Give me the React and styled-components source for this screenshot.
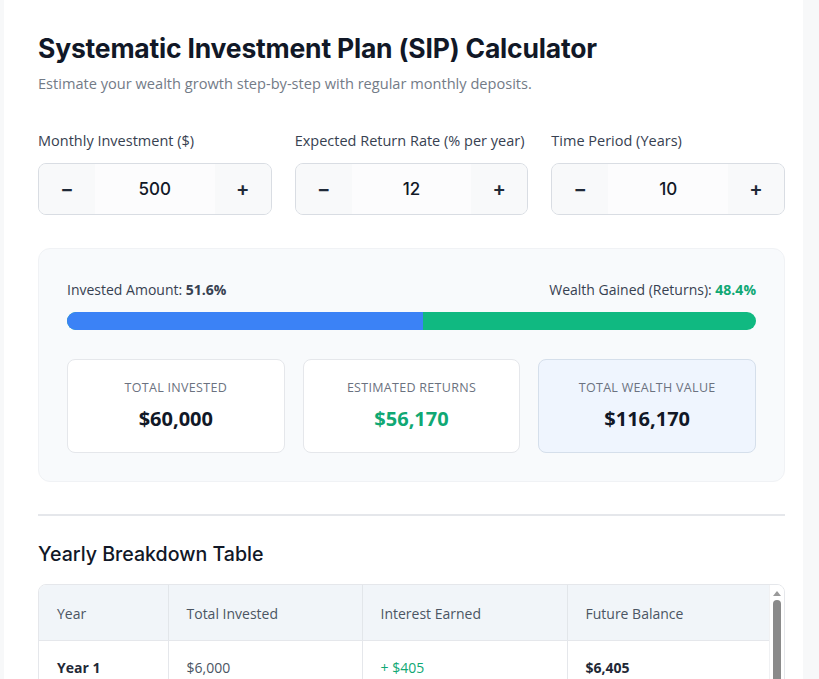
import styled, { createGlobalStyle } from "styled-components";

const Global = createGlobalStyle`
    html, body {
        margin: 0;
        padding: 0;
        background: #f7f8f9;
        font-family: "Open Sans", "Liberation Sans", sans-serif;
        color: #1f2937;
    }
`;

const Card = styled.div`
    margin-left: 4px;
    width: 799px;
    background: #ffffff;
    padding: 31px 17px 40px 34px;
    box-sizing: border-box;
`;

const Title = styled.h1`
    margin: 0;
    font-family: Inter, "Liberation Sans", sans-serif;
    font-size: 26.5px;
    font-weight: 700;
    color: #111827;
    line-height: 34px;
    letter-spacing: -0.2px;
`;

const Subtitle = styled.p`
    margin: 7px 0 0;
    font-size: 14.6px;
    color: #737b87;
    line-height: 22px;
`;

const Inputs = styled.div`
    margin-top: 37px;
    display: grid;
    grid-template-columns: repeat(3, 1fr);
    gap: 23px;
    width: 747px;
`;

const Field = styled.div`
    display: flex;
    flex-direction: column;
`;

const Label = styled.label`
    font-size: 14.5px;
    color: #374151;
    line-height: 20px;
    margin-bottom: 12px;
`;

const Stepper = styled.div`
    display: grid;
    grid-template-columns: 56px 1fr 56px;
    height: 52px;
    border: 1px solid #d9dde3;
    border-radius: 8px;
    background: #f9fafb;
    box-sizing: border-box;
    overflow: hidden;
`;

const StepButton = styled.button`
    border: none;
    background: #f8f9fa;
    font-family: Inter, "Liberation Sans", sans-serif;
    font-size: 20px;
    font-weight: 600;
    color: #1f2937;
    display: flex;
    align-items: center;
    justify-content: center;
    cursor: pointer;
    padding: 0;
`;

const StepValue = styled.div`
    background: #fcfcfd;
    display: flex;
    align-items: center;
    justify-content: center;
    font-family: Inter, "Liberation Sans", sans-serif;
    font-size: 17px;
    font-weight: 500;
    color: #111827;
`;

const Panel = styled.div`
    margin-top: 33px;
    width: 747px;
    box-sizing: border-box;
    background: #f8fafc;
    border: 1px solid #f0f2f5;
    border-radius: 12px;
    padding: 31px 28px 28px;
`;

const RatioRow = styled.div`
    display: flex;
    justify-content: space-between;
    font-size: 14px;
    line-height: 20px;
    color: #374151;
`;

const Strong = styled.strong`
    font-weight: 700;
    color: ${(p) => p.$color || "#374151"};
`;

const Bar = styled.div`
    margin-top: 12px;
    height: 18px;
    border-radius: 9px;
    overflow: hidden;
    display: flex;
    background: #10b981;
`;

const BarPart = styled.div`
    background: ${(p) => p.$color};
    height: 100%;
`;

const Stats = styled.div`
    margin-top: 29px;
    display: grid;
    grid-template-columns: repeat(3, 1fr);
    gap: 18px;
`;

const StatCard = styled.div`
    height: 94px;
    box-sizing: border-box;
    border-radius: 8px;
    border: 1px solid ${(p) => (p.$highlight ? "#d5dfeb" : "#e5e7eb")};
    background: ${(p) => (p.$highlight ? "#eff5fe" : "#ffffff")};
    display: flex;
    flex-direction: column;
    align-items: center;
    justify-content: center;
    gap: 8px;
`;

const StatLabel = styled.div`
    font-size: 12.5px;
    letter-spacing: 0.3px;
    text-transform: uppercase;
    color: #6b7280;
    line-height: 18px;
`;

const StatValue = styled.div`
    font-size: 20px;
    font-weight: 700;
    color: ${(p) => p.$color || "#111827"};
    line-height: 28px;
`;

const Divider = styled.hr`
    margin: 32px 0 0;
    width: 747px;
    border: none;
    border-top: 2px solid #e5e7eb;
`;

const SectionTitle = styled.h2`
    margin: 24px 0 0;
    font-family: Inter, "Liberation Sans", sans-serif;
    font-size: 19.6px;
    font-weight: 500;
    color: #111827;
    line-height: 28px;
`;

const TableWrap = styled.div`
    margin-top: 16px;
    width: 747px;
    height: 420px;
    display: flex;
    border: 1px solid #e5e7eb;
    border-radius: 8px;
    box-sizing: border-box;
    overflow: hidden;
`;

const Table = styled.table`
    flex: 1;
    border-collapse: collapse;
    table-layout: fixed;
    font-size: 14px;
    align-self: flex-start;
`;

const ScrollTrack = styled.div`
    width: 14px;
    flex-shrink: 0;
    background: #ffffff;
    border-left: 1px solid #f0f1f3;
    display: flex;
    flex-direction: column;
    align-items: center;
    padding-top: 6px;
    gap: 4px;
`;

const ScrollArrow = styled.div`
    width: 0;
    height: 0;
    border-left: 4px solid transparent;
    border-right: 4px solid transparent;
    border-bottom: 5px solid #9a9a9a;
`;

const ScrollThumb = styled.div`
    width: 8px;
    height: 240px;
    border-radius: 4px;
    background: #8a8a8a;
`;

const Th = styled.th`
    text-align: left;
    font-weight: 500;
    color: #4b5563;
    background: #f1f5f9;
    height: 55px;
    padding: 2px 18px 0;
    border-right: 1px solid #e2e6ea;
    border-bottom: 1px solid #e5e7eb;
    width: ${(p) => p.$w || "auto"};
    box-sizing: border-box;
    &:last-child {
        border-right: none;
    }
`;

const Td = styled.td`
    height: 54px;
    padding: 0 18px;
    border-right: 1px solid #e5e7eb;
    border-bottom: 1px solid #eef0f2;
    color: ${(p) => p.$color || "#4b5563"};
    font-weight: ${(p) => (p.$bold ? 700 : 400)};
    &:last-child {
        border-right: none;
    }
`;

const fmt = (n) => "$" + Math.round(n).toLocaleString("en-US");

const monthly = 500;
const rate = 12;
const years = 10;

const rows = [];
for (let y = 1; y <= years; y++) {
    const i = rate / 100 / 12;
    const n = y * 12;
    const fv = monthly * ((Math.pow(1 + i, n) - 1) / i) * (1 + i);
    const invested = monthly * n;
    rows.push({ year: y, invested, interest: fv - invested, fv });
}

const total = rows[rows.length - 1];
const investedPct = (total.invested / total.fv) * 100;

const inputs = [
    { label: "Monthly Investment ($)", value: 500 },
    { label: "Expected Return Rate (% per year)", value: 12 },
    { label: "Time Period (Years)", value: 10 },
];

const App = () => {
    return (
        <>
            <Global />
            <Card>
                <Title>Systematic Investment Plan (SIP) Calculator</Title>
                <Subtitle>Estimate your wealth growth step-by-step with regular monthly deposits.</Subtitle>

                <Inputs>
                    {inputs.map((f) => (
                        <Field key={f.label}>
                            <Label>{f.label}</Label>
                            <Stepper>
                                <StepButton>−</StepButton>
                                <StepValue>{f.value}</StepValue>
                                <StepButton>+</StepButton>
                            </Stepper>
                        </Field>
                    ))}
                </Inputs>

                <Panel>
                    <RatioRow>
                        <span>
                            Invested Amount: <Strong>{investedPct.toFixed(1)}%</Strong>
                        </span>
                        <span>
                            Wealth Gained (Returns): <Strong $color="#10a874">{(100 - investedPct).toFixed(1)}%</Strong>
                        </span>
                    </RatioRow>
                    <Bar>
                        <BarPart $color="#3b82f6" style={{ width: investedPct + "%" }} />
                    </Bar>
                    <Stats>
                        <StatCard>
                            <StatLabel>Total Invested</StatLabel>
                            <StatValue>{fmt(total.invested)}</StatValue>
                        </StatCard>
                        <StatCard>
                            <StatLabel>Estimated Returns</StatLabel>
                            <StatValue $color="#10a874">{fmt(total.interest)}</StatValue>
                        </StatCard>
                        <StatCard $highlight>
                            <StatLabel>Total Wealth Value</StatLabel>
                            <StatValue>{fmt(total.fv)}</StatValue>
                        </StatCard>
                    </Stats>
                </Panel>

                <Divider />
                <SectionTitle>Yearly Breakdown Table</SectionTitle>
                <TableWrap>
                    <Table>
                        <thead>
                            <tr>
                                <Th $w="129px">Year</Th>
                                <Th $w="194px">Total Invested</Th>
                                <Th $w="205px">Interest Earned</Th>
                                <Th>Future Balance</Th>
                            </tr>
                        </thead>
                        <tbody>
                            {rows.map((r) => (
                                <tr key={r.year}>
                                    <Td $bold $color="#1f2937">Year {r.year}</Td>
                                    <Td>{fmt(r.invested)}</Td>
                                    <Td $color="#10a874">+ {fmt(r.interest)}</Td>
                                    <Td $bold $color="#1f2937">{fmt(r.fv)}</Td>
                                </tr>
                            ))}
                        </tbody>
                    </Table>
                    <ScrollTrack>
                        <ScrollArrow />
                        <ScrollThumb />
                    </ScrollTrack>
                </TableWrap>
            </Card>
        </>
    );
};

export default App;
